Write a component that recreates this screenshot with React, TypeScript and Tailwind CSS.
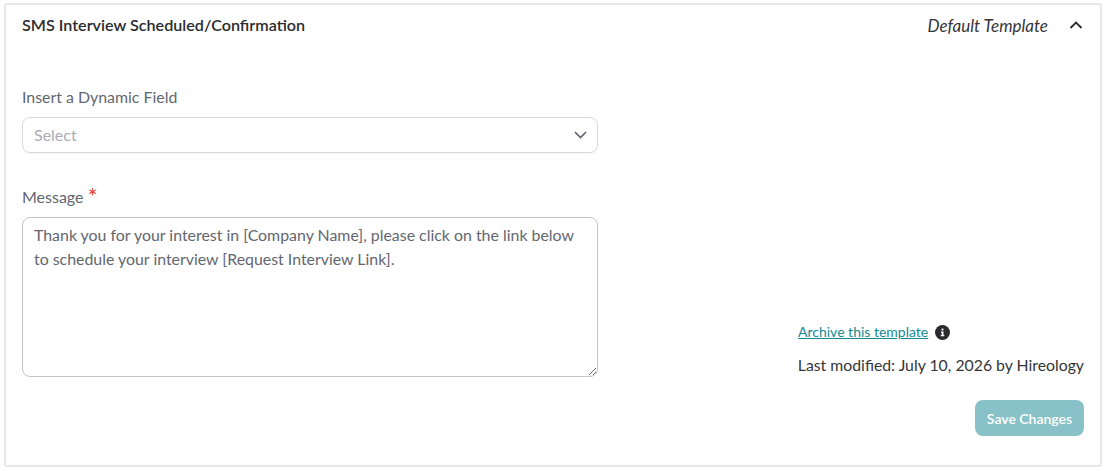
export default function App() {
  return (
    <div className="min-h-screen bg-white pt-[3px] pl-1 pr-[2px] font-['Lato',sans-serif]">
      <div className="h-[464px] rounded-[3px] border-2 border-[#e6e6eb] pl-4 pr-4 flex flex-col">
        <div className="flex items-center justify-between h-[40px]">
          <h2 className="text-[16.15px] font-semibold text-[#2b2b2f]">SMS Interview Scheduled/Confirmation</h2>
          <div className="flex items-center">
            <span className="pt-[2px] text-[17px] italic text-[#35353a]">Default Template</span>
            <svg className="ml-[21px] mr-[1px] w-[14px] h-[14px] text-[#2b2b2f]" fill="none" stroke="currentColor" viewBox="0 0 14 14">
              <path strokeWidth={1.8} d="M1.5 10l5.5-5.5 5.5 5.5" />
            </svg>
          </div>
        </div>

        <div className="flex flex-1 justify-between">
          <div className="w-[576px] pt-[42px]">
            <label className="block text-[15.9px] leading-[20px] text-[#63666f]">Insert a Dynamic Field</label>
            <div className="mt-[10px] h-[36px] rounded-lg border border-[#d9d9dc] flex items-center justify-between pl-[11px] pr-[10px] shadow-[0_1px_1px_rgba(0,0,0,0.04)]">
              <span className="text-[16px] text-[#a9acb3]">Select</span>
              <svg className="w-[13px] h-[8px] text-[#5c606a]" fill="none" stroke="currentColor" viewBox="0 0 13 8">
                <path strokeWidth={1.6} d="M1 1l5.5 5.5L12 1" />
              </svg>
            </div>

            <label className="block mt-[34px] text-[16px] leading-[20px] text-[#63666f]">
              Message <span className="relative top-[2px] text-[24px] leading-[0] text-[#e0403c]">*</span>
            </label>
            <textarea
              readOnly
              className="block mt-[10px] w-full h-[160px] rounded-lg border border-[#c4c4c8] pl-[11px] pr-3 py-[5px] text-[15.9px] leading-[24px] text-[#63666f] outline-none resize-y"
              defaultValue="Thank you for your interest in [Company Name], please click on the link below to schedule your interview [Request Interview Link]."
            />
          </div>

          <div className="flex flex-col items-end">
            <div className="mt-[277px] w-[286px] flex items-center">
              <a href="#" className="text-[14px] leading-[20px] text-[#148a94] underline">Archive this template</a>
              <span className="ml-[7px] w-[15px] h-[15px] rounded-full bg-[#2b2b2f] flex items-center justify-center">
                <svg className="w-[15px] h-[15px] text-white" fill="currentColor" viewBox="0 0 15 15">
                  <rect x="6.5" y="3.4" width="2" height="2" rx="0.6" />
                  <path d="M5.9 6.5h2.6v3.6h0.8v1.2H5.8v-1.2h0.9V7.7h-0.8z" />
                </svg>
              </span>
            </div>
            <p className="mt-[13px] text-[15.8px] leading-[20px] text-[#35353a]">Last modified: July 10, 2026 by Hireology</p>
            <button className="mt-[25px] h-[36px] w-[109px] rounded-lg bg-[#88c2c8] text-[14px] font-semibold text-white">Save Changes</button>
          </div>
        </div>
      </div>
    </div>
  )
}
